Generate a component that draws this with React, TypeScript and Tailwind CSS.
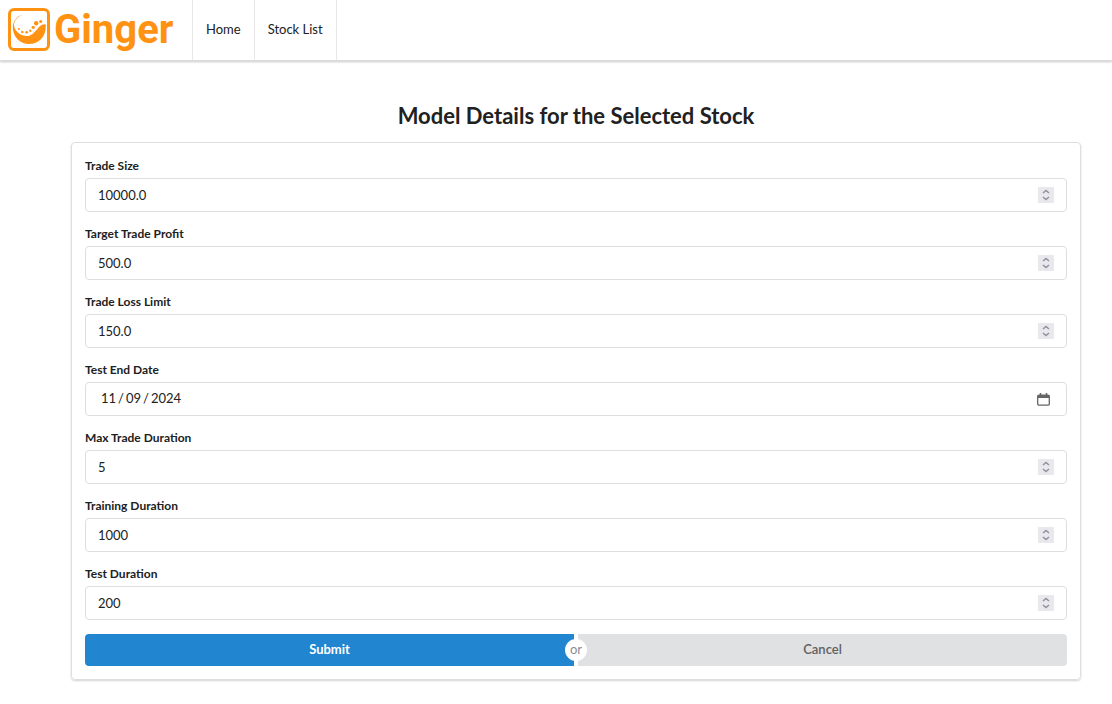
import { useRef } from "react";

function Logo() {
  return (
    <svg viewBox="0 0 42 43" className="h-[43px] w-[42px] shrink-0" aria-hidden="true">
      <rect x="1.5" y="1.5" width="39" height="40" rx="4.5" fill="#fff" stroke="#ff9212" strokeWidth="3" />
      <path
        d="M15 6.300C8.500 8.300 4.800 13.800 4.800 19.500C4.800 28.500 12 36 21 36C30.500 36 37.700 28.500 37.700 19.500L37.600 16.200C34 16 31.500 18.200 29.500 20.700C26 25 23 28.400 18 28C11 27.200 5.900 22 6 16.500C6.300 12.500 10 8.500 15 6.300Z"
        fill="#ff9212"
      />
      <g fill="#ff9212">
        <circle cx="28.200" cy="15.200" r="2.200" />
        <circle cx="32.700" cy="13.600" r="1.500" />
        <circle cx="25.200" cy="19.300" r="1.600" />
        <circle cx="22.300" cy="22.700" r="1.200" />
        <circle cx="18.700" cy="24.200" r="1.300" />
        <circle cx="14.300" cy="24" r="1.200" />
        <circle cx="10.900" cy="21.100" r="1" />
      </g>
    </svg>
  );
}

const box =
  "flex h-[34px] items-center rounded border border-[#dedede] bg-white pr-3 focus-within:border-[#85b7d9]";
const label = "mb-1 block h-4 text-xs leading-4 font-bold";

function NumberField({ id, text, value }: { id: string; text: string; value: string }) {
  const input = useRef<HTMLInputElement>(null);
  return (
    <div>
      <label htmlFor={id} className={label}>
        {text}
      </label>
      <div className={box}>
        <input
          ref={input}
          id={id}
          name={id}
          type="number"
          step="any"
          defaultValue={value}
          className="h-full min-w-0 flex-1 appearance-none bg-transparent pl-3 text-[13px] outline-none [-moz-appearance:textfield] [&::-webkit-inner-spin-button]:appearance-none"
        />
        <div className="flex h-4 w-4 flex-col bg-[#e9e9ed] text-[#8f8f9d]">
          <button
            type="button"
            aria-label={`Increase ${text}`}
            onClick={() => input.current && (input.current.value = String(Number(input.current.value) + 1))}
            className="flex h-2 items-center justify-center"
          >
            <svg viewBox="0 0 16 8" className="h-2 w-4" fill="none" stroke="currentColor" strokeWidth="1.500">
              <path d="M5 6L8 3.500L11 6" />
            </svg>
          </button>
          <button
            type="button"
            aria-label={`Decrease ${text}`}
            onClick={() => input.current && (input.current.value = String(Number(input.current.value) - 1))}
            className="flex h-2 items-center justify-center"
          >
            <svg viewBox="0 0 16 8" className="h-2 w-4" fill="none" stroke="currentColor" strokeWidth="1.500">
              <path d="M5 2L8 4.500L11 2" />
            </svg>
          </button>
        </div>
      </div>
    </div>
  );
}

function DateField({ id, text, value }: { id: string; text: string; value: string }) {
  const input = useRef<HTMLInputElement>(null);
  return (
    <div>
      <label htmlFor={id} className={label}>
        {text}
      </label>
      <div className={box}>
        <input
          ref={input}
          id={id}
          name={id}
          type="date"
          defaultValue={value}
          className="h-full min-w-0 flex-1 bg-transparent pl-[14px] text-[13px] outline-none [&::-webkit-calendar-picker-indicator]:hidden [&::-webkit-datetime-edit-text]:px-px"
        />
        <button
          type="button"
          aria-label="Open calendar"
          onClick={() => input.current?.showPicker()}
          className="mr-1 text-[#656565]"
        >
          <svg viewBox="0 0 13 13" className="h-[13px] w-[13px]" fill="none" stroke="currentColor">
            <rect x="0.700" y="2.200" width="11.600" height="10" rx="1.300" strokeWidth="1.300" />
            <path d="M0.700 3.500H12.300" strokeWidth="3" />
            <path d="M3.500 0V2M9.500 0V2" strokeWidth="1.500" />
          </svg>
        </button>
      </div>
    </div>
  );
}

export default function App() {
  return (
    <div className="min-h-screen bg-white font-['Lato',sans-serif] text-[#212121]">
      <header className="flex h-[61px] border-b border-[#dcdcdc] shadow-[0_1px_2px_0_rgba(34,36,38,0.25)]">
        <a href="#home" className="flex items-center pr-5 pb-0.5 pl-2 text-[#ff9212]">
          <Logo />
          <span className="ml-1 w-[118px] font-['Roboto',sans-serif] text-[40px] leading-[43px] font-bold">
            Ginger
          </span>
        </a>
        <nav className="flex text-[13px]">
          <a href="#home" className="flex items-center border-l border-[#e8e8e8] px-[13px]">
            Home
          </a>
          <a href="#stocks" className="flex items-center border-x border-[#e8e8e8] px-[13px]">
            Stock List
          </a>
        </nav>
      </header>
      <main className="pt-[41px] pr-[31px] pb-6 pl-[71px]">
        <h1 className="text-center text-[22px] leading-7 font-bold">Model Details for the Selected Stock</h1>
        <form
          onSubmit={(e) => e.preventDefault()}
          className="mt-3 rounded border border-[#dedede] p-[13px] shadow-[0_1px_2px_0_rgba(34,36,38,0.2)]"
        >
          <div className="flex flex-col gap-[14px] pt-0.5">
            <NumberField id="trade-size" text="Trade Size" value="10000.0" />
            <NumberField id="target-profit" text="Target Trade Profit" value="500.0" />
            <NumberField id="loss-limit" text="Trade Loss Limit" value="150.0" />
            <DateField id="test-end" text="Test End Date" value="2024-11-09" />
            <NumberField id="max-duration" text="Max Trade Duration" value="5" />
            <NumberField id="training-duration" text="Training Duration" value="1000" />
            <NumberField id="test-duration" text="Test Duration" value="200" />
          </div>
          <div className="relative mt-[14px] flex h-8 gap-1 text-[13px]">
            <button type="submit" className="flex-1 rounded-l bg-[#2185d0] font-bold text-white">
              Submit
            </button>
            <button type="reset" className="flex-1 rounded-r bg-[#e0e1e2] font-semibold text-[#5f6061]">
              Cancel
            </button>
            <span className="pointer-events-none absolute inset-0 m-auto flex h-[22px] w-[22px] items-center justify-center rounded-full bg-white text-[#8c8c8c]">
              or
            </span>
          </div>
        </form>
      </main>
    </div>
  );
}
